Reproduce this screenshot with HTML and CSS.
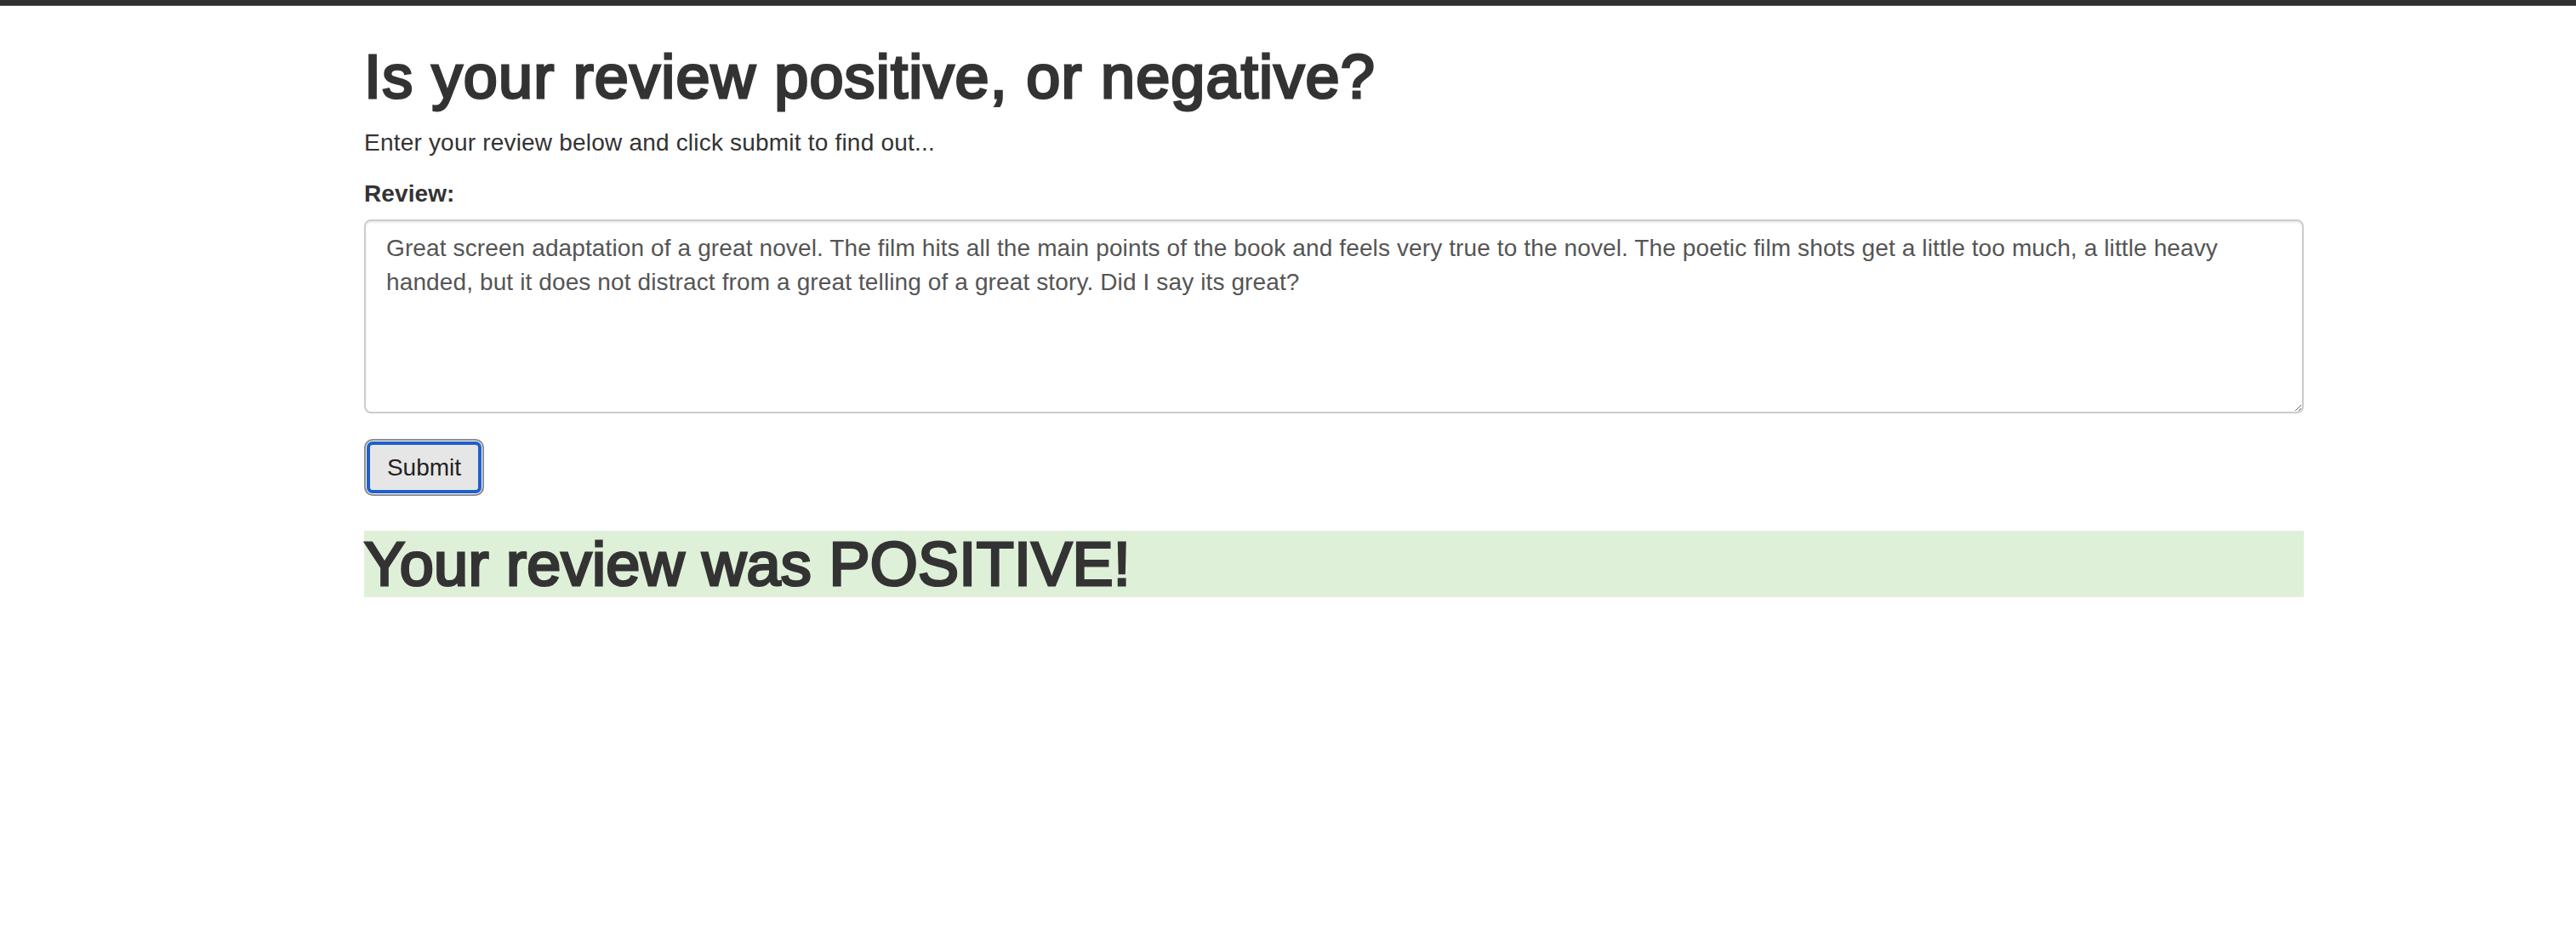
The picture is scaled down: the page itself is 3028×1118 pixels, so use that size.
FILE: index.html
```html
<!DOCTYPE html>
<html lang="en">
<head>
<meta charset="utf-8">
<title>Review sentiment</title>
<link rel="stylesheet" href="styles.css">
</head>
<body>
<div class="topbar"></div>
<div class="container">
  <h1 class="title">Is your review positive, or negative?</h1>
  <p class="lead-text">Enter your review below and click submit to find out...</p>
  <form class="review-form">
    <div class="form-group">
      <label class="field-label" for="review">Review:</label>
      <textarea class="form-control" id="review" rows="5">Great screen adaptation of a great novel. The film hits all the main points of the book and feels very true to the novel. The poetic film shots get a little too much, a little heavy handed, but it does not distract from a great telling of a great story. Did I say its great?</textarea>
    </div>
    <button type="button" class="submit-btn">Submit</button>
  </form>
  <h1 class="result result-positive">Your review was POSITIVE!</h1>
</div>
</body>
</html>
```

FILE: styles.css
```css
html, body {
  margin: 0;
  padding: 0;
  background: #fff;
}
body {
  font-family: "Liberation Sans", Arial, sans-serif;
  font-size: 28px;
  line-height: 40px;
  color: #333;
}
.topbar {
  height: 6px;
  background: #303033;
  border-bottom: 1px solid #58585c;
}
.container {
  width: 2280px;
  margin: 0 0 0 428px;
}
.title {
  margin: 44px 0 18px;
  font-size: 72px;
  line-height: 79px;
  font-weight: 400;
  letter-spacing: 1.2px;
  -webkit-text-stroke: 3px #333;
  color: #333;
}
.lead-text {
  margin: 0 0 20px;
  letter-spacing: 0.2px;
}
.form-group {
  display: flex;
  flex-direction: column;
  margin-bottom: 30px;
}
.field-label {
  font-weight: 700;
  margin-bottom: 10px;
  letter-spacing: 0.1px;
}
.form-control {
  box-sizing: border-box;
  width: 100%;
  height: 228px;
  margin: 0;
  padding: 12px 24px;
  border: 2px solid #ccc;
  border-radius: 8px;
  font-family: "Liberation Sans", Arial, sans-serif;
  font-size: 28px;
  line-height: 40px;
  letter-spacing: 0.12px;
  color: #555;
  background: #fff;
  box-shadow: inset 0 2px 2px rgba(0,0,0,.075);
}
.submit-btn {
  box-sizing: border-box;
  width: 141px;
  height: 67px;
  margin: 0;
  padding: 0;
  border: 2px solid #8e8e8e;
  border-radius: 10px;
  background: #e6e6e6;
  box-shadow: inset 0 0 0 1px #fff, inset 0 0 0 5px #1f5fcc;
  font-family: "Liberation Sans", Arial, sans-serif;
  font-size: 28px;
  color: #222;
  display: block;
}
.result {
  margin: 41px 0 0;
  font-size: 72px;
  line-height: 78px;
  font-weight: 400;
  letter-spacing: 0.3px;
  -webkit-text-stroke: 3px #333;
  color: #333;
}
.result-positive {
  background: #dff0d8;
}
```
